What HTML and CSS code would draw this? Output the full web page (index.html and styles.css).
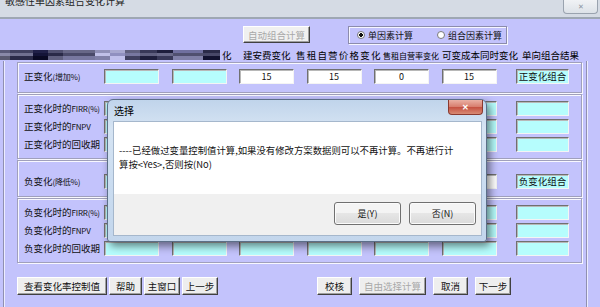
FILE: index.html
```html
<!DOCTYPE html>
<html lang="zh-CN">
<head>
  <meta charset="UTF-8">
  <title>单因素组合变化计算</title>
  <link rel="stylesheet" href="styles.css">
</head>
<body>
  <div class="titlebar">
    <span class="wintitle">敏感性单因素组合变化计算</span>
    <span class="winclose">✕</span>
  </div>

  <div class="client">
    <div class="toolbar">
      <span class="btn auto">自动组合计算</span>
      <div class="mode">
        <span class="radio on"></span><span class="opt">单因素计算</span>
        <span class="radio second"></span><span class="opt">组合因素计算</span>
      </div>
    </div>

    <div class="heads">
      <div class="stripes">
        <i></i><i></i><i></i><i></i><i></i><i></i><i></i><i></i><i></i><i></i><i></i><i></i>
      </div>
      <span class="h0">化</span>
      <span class="h1">建安费变化</span>
      <span class="h2">售租自营价格变化</span>
      <span class="h3">售租自营率变化</span>
      <span class="h4">可变成本同时变化</span>
      <span class="h5">单向组合结果</span>
    </div>

    <div class="frame">
      <div class="group g1">
        <div class="row">
          <span class="lbl">正变化<small>(增加%)</small></span>
          <span class="box cyan"></span>
          <span class="box cyan"></span>
          <span class="box">15</span>
          <span class="box">15</span>
          <span class="box">0</span>
          <span class="box">15</span>
          <span class="box cyan tag">正变化组合</span>
        </div>
      </div>

      <div class="group g2">
        <div class="row">
          <span class="lbl">正变化时的<small>FIRR(%)</small></span>
          <span class="box cyan"></span><span class="box cyan"></span><span class="box cyan"></span>
          <span class="box cyan"></span><span class="box cyan"></span><span class="box cyan"></span>
          <span class="box cyan"></span>
        </div>
        <div class="row">
          <span class="lbl">正变化时的<small>FNPV</small></span>
          <span class="box cyan"></span><span class="box cyan"></span><span class="box cyan"></span>
          <span class="box cyan"></span><span class="box cyan"></span><span class="box cyan"></span>
          <span class="box cyan"></span>
        </div>
        <div class="row">
          <span class="lbl">正变化时的回收期</span>
          <span class="box cyan"></span><span class="box cyan"></span><span class="box cyan"></span>
          <span class="box cyan"></span><span class="box cyan"></span><span class="box cyan"></span>
          <span class="box cyan"></span>
        </div>
      </div>

      <div class="group g3">
        <div class="row">
          <span class="lbl">负变化<small>(降低%)</small></span>
          <span class="box cyan"></span>
          <span class="box cyan"></span>
          <span class="box">15</span>
          <span class="box">15</span>
          <span class="box">0</span>
          <span class="box">15</span>
          <span class="box cyan tag">负变化组合</span>
        </div>
      </div>

      <div class="group g4">
        <div class="row">
          <span class="lbl">负变化时的<small>FIRR(%)</small></span>
          <span class="box cyan"></span><span class="box cyan"></span><span class="box cyan"></span>
          <span class="box cyan"></span><span class="box cyan"></span><span class="box cyan"></span>
          <span class="box cyan"></span>
        </div>
        <div class="row">
          <span class="lbl">负变化时的<small>FNPV</small></span>
          <span class="box cyan"></span><span class="box cyan"></span><span class="box cyan"></span>
          <span class="box cyan"></span><span class="box cyan"></span><span class="box cyan"></span>
          <span class="box cyan"></span>
        </div>
        <div class="row">
          <span class="lbl">负变化时的回收期</span>
          <span class="box cyan"></span><span class="box cyan"></span><span class="box cyan"></span>
          <span class="box cyan"></span><span class="box cyan"></span><span class="box cyan"></span>
          <span class="box cyan"></span>
        </div>
      </div>

      <div class="actions">
        <div class="left">
          <span class="btn w90">查看变化率控制值</span>
          <span class="btn w33">帮助</span>
          <span class="btn w36">主窗口</span>
          <span class="btn w36">上一步</span>
        </div>
        <div class="right">
          <span class="btn w35">校核</span>
          <span class="btn w67 off">自由选择计算</span>
          <span class="btn w35">取消</span>
          <span class="btn w36">下一步</span>
        </div>
      </div>
    </div>

    <div class="dialog">
      <div class="dlg-title">选择<span class="dlg-x">✕</span></div>
      <div class="dlg-inner">
        <div class="dlg-msg">----已经做过变量控制值计算,如果没有修改方案数据则可以不再计算。不再进行计<br>算按&lt;Yes&gt;,否则按(No)</div>
        <div class="dlg-foot">
          <span class="wbtn">是(Y)</span>
          <span class="wbtn">否(N)</span>
        </div>
      </div>
    </div>
  </div>
</body>
</html>
```

FILE: styles.css
```css
body {
  margin: 0;
  width: 600px;
  height: 307px;
  overflow: hidden;
  font-family: "Noto Sans CJK SC", sans-serif;
  font-size: 9.5px;
  color: #111;
  background: #c3c3fc;
}

/* window title bar */
.titlebar {
  display: flex;
  justify-content: space-between;
  height: 17px;
  background: #d5dbe4;
  border-bottom: 2px solid #9ea7b3;
  overflow: hidden;
}

.wintitle {
  margin: -5px 0 0 5px;
  font-size: 10px;
  line-height: 12px;
  color: #222;
}

.winclose {
  width: 33px;
  height: 13px;
  margin-right: 2px;
  border: 1px solid #9aa3af;
  border-top: none;
  border-radius: 0 0 4px 4px;
  background: linear-gradient(#f0f2f5, #dde2e8);
  color: #8a93a0;
  font-size: 7px;
  line-height: 13px;
  text-align: center;
}

.client {
  position: relative;
  height: 288px;
}

/* top controls */
.toolbar {
  display: flex;
  height: 17px;
  padding-top: 7px;
  margin-bottom: 6px;
}

.btn {
  box-sizing: border-box;
  display: inline-block;
  height: 18px;
  line-height: 16px;
  text-align: center;
  white-space: nowrap;
  background: #eeeeee;
  border: 1px solid;
  border-color: #ffffff #404040 #404040 #ffffff;
  box-shadow: inset -1px -1px 0 #a0a0a0;
  font-size: 9.5px;
}

.btn.auto {
  width: 67px;
  height: 17px;
  margin-left: 243px;
  color: #a8a8a8;
  background: #f0f0f0;
}

.btn.off {
  color: #a8a8a8;
}

.mode {
  display: flex;
  align-items: center;
  box-sizing: border-box;
  width: 159px;
  height: 18px;
  margin-left: 38px;
  padding-left: 8px;
  border: 1px solid #8c8cac;
  box-shadow: inset 1px 1px 0 #f6f6ff, 1px 1px 0 #f6f6ff;
}

.radio {
  box-sizing: border-box;
  width: 8px;
  height: 8px;
  border: 1px solid #7a7a7a;
  border-radius: 50%;
  background: #fff;
}

.radio.on {
  background: radial-gradient(circle, #111 0 1.6px, #fff 2px);
}

.radio.second {
  margin-left: 24px;
}

.opt {
  margin-left: 3px;
  font-size: 9px;
}

/* column headings */
.heads {
  display: flex;
  align-items: center;
  height: 12px;
  white-space: nowrap;
  color: #000;
}

.stripes {
  display: flex;
  width: 220px;
  height: 10px;
}

.stripes i {
  display: block;
  height: 10px;
}

.stripes i:nth-child(1)  { width: 10px; background: linear-gradient(#5a5a78 0 30%, #8a8aa8 30% 60%, #5a5a70 60%); }
.stripes i:nth-child(2)  { width: 23px; background: linear-gradient(#404060 0 30%, #707090 30% 60%, #2a2a48 60%); }
.stripes i:nth-child(3)  { width: 15px; background: linear-gradient(#202048 0 30%, #141438 30% 60%, #0a0a24 60%); }
.stripes i:nth-child(4)  { width: 15px; background: linear-gradient(#505070 0 30%, #2a2a48 30% 60%, #606080 60%); }
.stripes i:nth-child(5)  { width: 32px; background: linear-gradient(#686888 0 30%, #4a4a6a 30% 60%, #7878a0 60%); }
.stripes i:nth-child(6)  { width: 15px; background: linear-gradient(#9090b8 0 30%, #c0c0e8 30% 60%, #8080a8 60%); }
.stripes i:nth-child(7)  { width: 15px; background: linear-gradient(#a8a8d0 0 30%, #9090c0 30% 60%, #c0c0ec 60%); }
.stripes i:nth-child(8)  { width: 15px; background: linear-gradient(#606080 0 30%, #7878a0 30% 60%, #404060 60%); }
.stripes i:nth-child(9)  { width: 17px; background: linear-gradient(#383858 0 30%, #606080 30% 60%, #1e1e3c 60%); }
.stripes i:nth-child(10) { width: 16px; background: linear-gradient(#1e1e3c 0 30%, #6a6a8a 30% 60%, #383858 60%); }
.stripes i:nth-child(11) { width: 30px; background: linear-gradient(#7070a0 0 30%, #505070 30% 60%, #8080a8 60%); }
.stripes i:nth-child(12) { width: 17px; background: linear-gradient(#2a2a48 0 30%, #484868 30% 60%, #121230 60%); }

.h0 { width: 23px; padding-left: 2px; box-sizing: border-box; }
.h1 { width: 53px; }
.h2 { width: 87px; letter-spacing: 1.2px; }
.h3 { width: 59px; font-size: 8px; }
.h4 { width: 80px; }
.h5 { width: 60px; }

/* form frame and groups */
.frame {
  box-sizing: border-box;
  width: 584px;
  height: 247px;
  margin-left: 3px;
  padding: 1px 4px 0 13px;
  border-left: 1px solid #9090b0;
  border-right: 1px solid #9090b0;
  box-shadow: inset 1px 0 0 #ececff, 1px 0 0 #ececff;
}

.group {
  display: flex;
  flex-direction: column;
  gap: 3px;
  padding: 6px 5px 6px 6px;
  border: 1px solid #a0a0bc;
  box-shadow: inset 1px 1px 0 #f8f8ff, 1px 1px 0 #f8f8ff;
}

.g1 { padding-bottom: 8px; }
.g2, .g3, .g4 { margin-top: 1px; }
.g3 { padding-top: 13px; padding-bottom: 7px; }

.row {
  display: grid;
  grid-template-columns: 67.5px repeat(6, 55px) 60px;
  column-gap: 12.5px;
  height: 15px;
  align-items: center;
}

.row > :last-child {
  margin-left: 7px;
}

.lbl {
  white-space: nowrap;
  line-height: 15px;
}

.lbl small {
  font-size: 8px;
  letter-spacing: -0.2px;
}

.box {
  box-sizing: border-box;
  height: 15px;
  line-height: 13px;
  text-align: center;
  font-size: 9px;
  background: #ffffff;
  border: 1px solid;
  border-color: #707070 #f4f4f4 #f4f4f4 #707070;
  box-shadow: inset 1px 1px 0 #b8b8b8;
}

.box.cyan {
  background: #b6fdfd;
}

.box.tag {
  font-size: 9.5px;
  white-space: nowrap;
}

/* bottom buttons */
.actions {
  display: flex;
  margin-top: 14px;
}

.actions .left {
  display: flex;
  gap: 2px;
}

.actions .right {
  display: flex;
  gap: 7px;
  margin-left: 99px;
}

.w90 { width: 90px; }
.w33 { width: 33px; }
.w35 { width: 35px; }
.w36 { width: 36px; }
.w67 { width: 67px; }

/* message box */
.dialog {
  position: absolute;
  left: 107px;
  top: 80px;
  box-sizing: border-box;
  width: 380px;
  height: 143px;
  padding: 0 4px 4px 5px;
  border: 1px solid #5c6f88;
  border-radius: 6px 6px 3px 3px;
  background: linear-gradient(#c0d4eb, #d6e4f3 20%, #cadcf0 60%, #c3d6ec);
  box-shadow: 3px 4px 8px rgba(0, 0, 0, 0.5);
}

.dlg-title {
  position: relative;
  height: 21px;
  line-height: 21px;
  padding-left: 1px;
  font-size: 10px;
  color: #000;
}

.dlg-x {
  position: absolute;
  top: 0;
  right: -1px;
  box-sizing: border-box;
  width: 35px;
  height: 15px;
  border: 1px solid #8a3a30;
  border-top: none;
  border-radius: 0 0 4px 4px;
  background: linear-gradient(#eab0a4, #d77c6c 50%, #c55040 51%, #d88a74);
  color: #fff;
  font-size: 8px;
  font-weight: bold;
  line-height: 14px;
  text-align: center;
}

.dlg-inner {
  border: 1px solid #a5b7cc;
}

.dlg-msg {
  box-sizing: border-box;
  height: 72px;
  padding: 21px 0 0 5px;
  background: #ffffff;
  font-size: 9.4px;
  line-height: 14px;
  white-space: nowrap;
}

.dlg-foot {
  display: flex;
  justify-content: flex-end;
  gap: 8px;
  box-sizing: border-box;
  height: 41px;
  padding: 8px 5px 0 0;
  background: #f0f0f0;
}

.wbtn {
  box-sizing: border-box;
  width: 67px;
  height: 23px;
  line-height: 21px;
  text-align: center;
  font-size: 9px;
  border: 1px solid #707070;
  border-radius: 3px;
  background: linear-gradient(#f4f4f4 0 45%, #e6e6e6 50%, #dadada);
  box-shadow: inset 0 0 0 1px #fbfbfb;
}
```
